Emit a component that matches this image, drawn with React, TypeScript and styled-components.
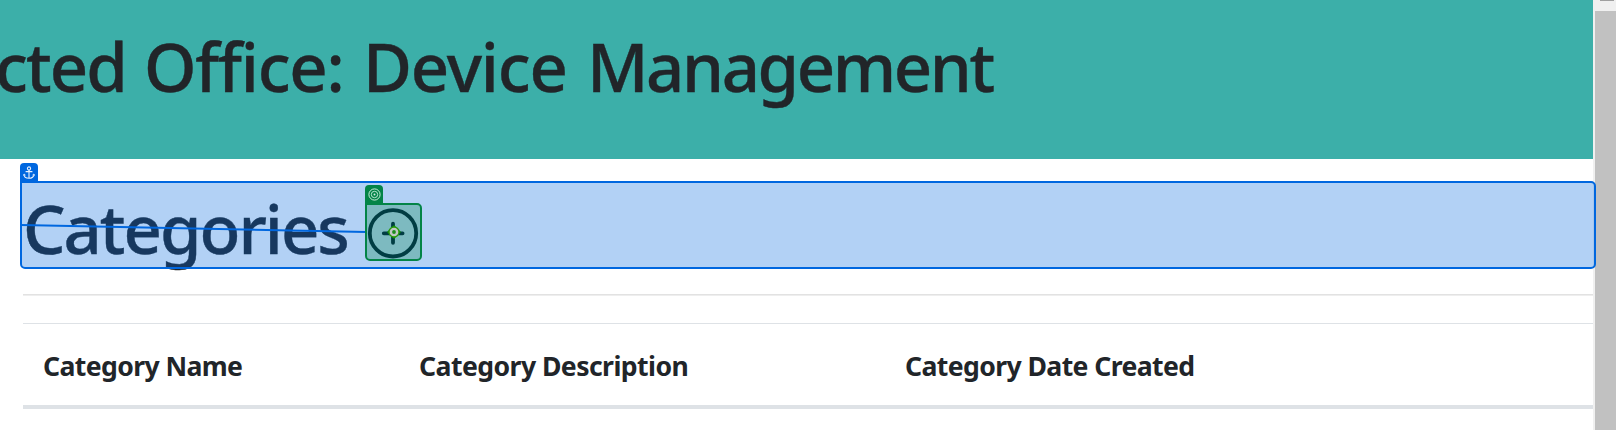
import React from "react";
import styled, { createGlobalStyle } from "styled-components";

const GlobalStyle = createGlobalStyle`
  * { box-sizing: border-box; }
  body {
    margin: 0;
    background: #fff;
    color: #212529;
    font-family: "Segoe UI", "Noto Sans", sans-serif;
    overflow: hidden;
  }
`;

const Window = styled.div`
  display: flex;
  width: 1616px;
  height: 430px;
  overflow: hidden;
`;

const Page = styled.main`
  width: 1593px;
  flex: none;
`;

const Banner = styled.header`
  height: 159px;
  padding-top: 20px;
  background: #3cafa9;
  overflow: hidden;
`;

const BannerTitle = styled.h1`
  display: flex;
  margin: 0 0 0 -5px;
  font-size: 67px;
  font-weight: 500;
  -webkit-text-stroke: 0.4px currentColor;
  line-height: 92px;
  white-space: pre;
`;

const Word = styled.span<{ $width: number; $tracking: number }>`
  flex: none;
  width: ${(p) => p.$width}px;
  letter-spacing: ${(p) => p.$tracking}px;
`;

const Content = styled.section`
  padding: 22px 0 0 20px;
`;

const Selection = styled.div`
  position: relative;
  display: flex;
  width: 1576px;
  height: 88px;
  padding: 1px 0 0 3px;
`;

const Heading = styled.h1`
  margin: 0;
  width: 342px;
  font-size: 67px;
  font-weight: 500;
  -webkit-text-stroke: 0.4px currentColor;
  line-height: 92px;
  letter-spacing: -2px;
`;

const Target = styled.div`
  width: 57px;
  height: 58px;
  margin-top: 21px;
`;

const TargetOverlay = styled.div`
  position: absolute;
  left: 345px;
  top: 22px;
  width: 57px;
  height: 58px;
`;

const Overlay = styled.div<{ $border: string; $fill: string }>`
  position: absolute;
  inset: 0;
  border: 2px solid ${(p) => p.$border};
  border-radius: 0 5px 5px 5px;
  background: ${(p) => p.$fill};
`;

const Tab = styled.div<{ $color: string }>`
  position: absolute;
  left: 0;
  top: -18px;
  display: flex;
  align-items: center;
  justify-content: center;
  width: 18px;
  height: 19px;
  border-radius: 4px 4px 0 0;
  background: ${(p) => p.$color};
`;

const PlusIcon = styled.svg`
  display: block;
  width: 57px;
  height: 58px;
`;

const Marker = styled.svg`
  position: absolute;
  left: 21px;
  top: 21px;
`;

const Connector = styled.svg`
  position: absolute;
  left: 0;
  top: 0;
`;

const Rule = styled.hr`
  height: 2px;
  margin: 25px 0 27px 3px;
  border: 0;
  border-top: 1px solid #e2e2e2;
  background: #eee;
`;

const HeadRow = styled.div`
  display: grid;
  grid-template-columns: 376px 486px 1fr;
  height: 86px;
  margin-left: 3px;
  padding: 19px 0 0 20px;
  border-top: 1px solid #dee2e6;
  border-bottom: 4px solid #dee2e6;
`;

const HeadCell = styled.div<{ $tracking: number }>`
  font-size: 26.6px;
  font-weight: 680;
  line-height: 46px;
  white-space: nowrap;
  letter-spacing: ${(p) => p.$tracking}px;
`;

const Scrollbar = styled.aside`
  display: flex;
  flex-direction: column;
  flex: 1;
  padding-left: 2px;
  background: #f0f0f0;
`;

const ScrollArrow = styled.div`
  width: 14px;
  height: 11px;
  margin-left: 5px;
  border-top: 1px solid #a0a0a0;
`;

const Thumb = styled.div`
  flex: 1;
  background: #c1c1c1;
`;

const titleWords = [
  { text: "cted", width: 149, tracking: -1.9 },
  { text: "Office:", width: 219, tracking: -1.2 },
  { text: "Device", width: 224, tracking: -1.2 },
  { text: "Management", width: 420, tracking: -2.4 },
];

const columns = [
  { text: "Category Name", tracking: -0.6 },
  { text: "Category Description", tracking: -0.55 },
  { text: "Category Date Created", tracking: -0.6 },
];

const BLUE = "#0067df";
const GREEN = "#038447";

export default function App() {
  return (
    <Window>
      <GlobalStyle />
      <Page>
        <Banner>
          <BannerTitle>
            {titleWords.map((w) => (
              <Word key={w.text} $width={w.width} $tracking={w.tracking}>
                {w.text}
              </Word>
            ))}
          </BannerTitle>
        </Banner>
        <Content>
          <Selection>
            <Heading>Categories</Heading>
            <Target>
              <PlusIcon viewBox="0 0 57 58" fill="none" stroke="#000">
                <circle cx="28" cy="30.3" r="23.2" strokeWidth="3.8" />
                <path d="M18.8 30.3H37.6M28 20.7V39.8" strokeWidth="3.8" strokeLinecap="round" />
              </PlusIcon>
            </Target>
            <Overlay $border={BLUE} $fill="rgba(0,103,223,0.3)" />
            <Tab $color={BLUE}>
              <svg width="12" height="14" viewBox="0 0 12 14" fill="none" stroke="#e8f2ff" strokeWidth="1.1">
                <circle cx="6" cy="2.5" r="1.6" />
                <path d="M6 4V12.2M2.6 5.6H9.4M1 8.2C1 10.8 3.2 12.3 6 12.3S11 10.8 11 8.2" />
                <path d="M0.5 9.6L1.2 8L2.6 9.2M9.4 9.2L10.8 8L11.5 9.6" strokeWidth="0.8" />
              </svg>
            </Tab>
            <Connector width="346" height="88" fill="none">
              <path d="M1 44L346 51" stroke={BLUE} strokeWidth="2" />
            </Connector>
            <TargetOverlay>
              <Overlay $border={GREEN} $fill="rgba(3,132,71,0.3)" />
              <Tab $color={GREEN}>
                <svg width="13" height="13" viewBox="0 0 13 13" fill="none" stroke="#cdeedd">
                  <circle cx="6.5" cy="6.5" r="5.6" />
                  <circle cx="6.5" cy="6.5" r="3.2" strokeWidth="0.9" />
                  <circle cx="6.5" cy="6.5" r="1" fill="#cdeedd" stroke="none" />
                </svg>
              </Tab>
              <Marker width="16" height="16" viewBox="0 0 16 16">
                <path d="M8 1L15 8L8 15L1 8Z" fill="#078b07" />
                <circle cx="8" cy="8" r="5" fill="#c0c8c4" stroke="#2a9a0c" strokeWidth="1.3" />
                <circle cx="8" cy="8" r="1.9" fill="#1d8d1d" />
              </Marker>
            </TargetOverlay>
          </Selection>
          <Rule />
          <HeadRow>
            {columns.map((c) => (
              <HeadCell key={c.text} $tracking={c.tracking}>
                {c.text}
              </HeadCell>
            ))}
          </HeadRow>
        </Content>
      </Page>
      <Scrollbar>
        <ScrollArrow />
        <Thumb />
      </Scrollbar>
    </Window>
  );
}
